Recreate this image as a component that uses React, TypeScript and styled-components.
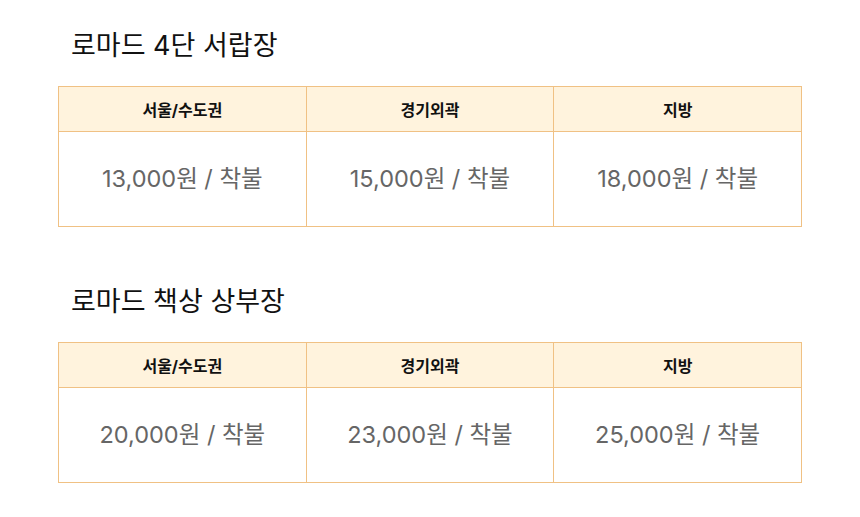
import styled, { createGlobalStyle } from "styled-components";

const GlobalStyle = createGlobalStyle`
  body {
    margin: 0;
    background: #ffffff;
    font-family: Inter, "Noto Sans CJK KR", sans-serif;
  }
`;

interface ShippingSection {
  title: string;
  prices: string[];
}

const regions = ["서울/수도권", "경기외곽", "지방"];

const sections: ShippingSection[] = [
  { title: "로마드 4단 서랍장", prices: ["13,000", "15,000", "18,000"] },
  { title: "로마드 책상 상부장", prices: ["20,000", "23,000", "25,000"] },
];

const App = () => {
  return (
    <Page>
      <GlobalStyle />
      {sections.map((section) => (
        <Section key={section.title}>
          <Title>{section.title}</Title>
          <PriceTable>
            <thead>
              <tr>
                {regions.map((region) => (
                  <HeadCell key={region}>{region}</HeadCell>
                ))}
              </tr>
            </thead>
            <tbody>
              <tr>
                {section.prices.map((price, key) => (
                  <BodyCell key={key}>{price}원 / 착불</BodyCell>
                ))}
              </tr>
            </tbody>
          </PriceTable>
        </Section>
      ))}
    </Page>
  );
};

const Page = styled.div`
  padding: 27px 58px 0 58px;
  display: flex;
  flex-direction: column;
  gap: 56px;
`;

const Section = styled.section`
  display: flex;
  flex-direction: column;
`;

const Title = styled.h2`
  margin: 0 0 22px 13px;
  font-size: 27px;
  font-weight: 400;
  line-height: 37px;
  color: #111111;
`;

const PriceTable = styled.table`
  width: 744px;
  border-collapse: collapse;
  table-layout: fixed;
`;

const HeadCell = styled.th`
  height: 44px;
  padding: 0;
  background: #fff3dd;
  border: 1px solid #f0c184;
  font-size: 16px;
  font-weight: 700;
  color: #111111;
  text-align: center;
`;

const BodyCell = styled.td`
  height: 90px;
  padding: 0 0 4px 0;
  border: 1px solid #f0c184;
  font-size: 23.5px;
  font-weight: 400;
  color: #666666;
  text-align: center;
`;

export default App;
